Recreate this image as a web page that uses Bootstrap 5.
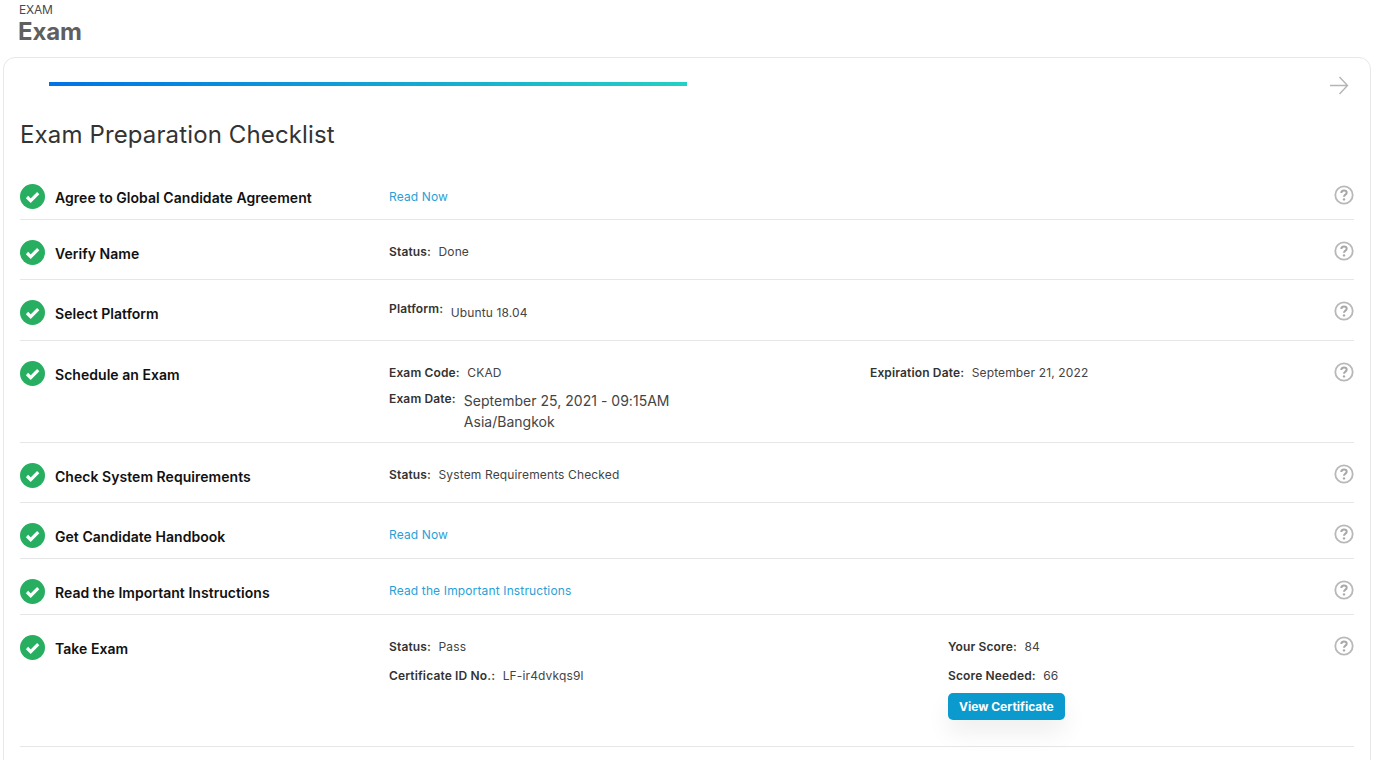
<!DOCTYPE html>
<html lang="en">
<head>
  <meta charset="UTF-8" />
  <meta name="viewport" content="width=device-width, initial-scale=1.0" />
  <title>Exam</title>
  <link href="https://cdn.jsdelivr.net/npm/bootstrap@5.3.3/dist/css/bootstrap.min.css" rel="stylesheet" />
  <style>
    html, body { height: 100%; overflow: hidden; }
    body { font-family: Inter, "Liberation Sans", sans-serif; background: #fff; color: #3a3a3a; }
    .page-head { padding: 3px 0 0 18px; height: 57px; }
    .crumb { font-size: 12px; line-height: 14px; color: #4a4a4a; padding-left: 1px; letter-spacing: -.2px; }
    .page-title { font-size: 24px; line-height: 30px; font-weight: 700; color: #5f5f5f; margin: 0; letter-spacing: -.1px; }
    .exam-panel { margin: 0 7px 0 3px; border: 1px solid #e8e8e8; border-radius: 12px; padding: 0 16px 40px; height: 800px; }
    .top-strip { height: 55px; padding: 24px 5px 0 29px; }
    .progress-line { width: 638px; height: 4px; background: linear-gradient(90deg, #0073e6, #24d0c4); }
    .go-arrow { margin-top: -7px; }
    .panel-title { font-size: 24px; line-height: 30px; font-weight: 400; color: #333; margin: 7px 0 34px; letter-spacing: .13px; }
    .check-row { border-bottom: 1px solid #e6e6e6; padding-top: 20px; }
    .check-row.h-56 { height: 56px; }
    .check-row.h-60 { height: 60px; }
    .check-row.h-61 { height: 61px; }
    .check-row.h-102 { height: 102px; }
    .check-row.h-132 { height: 132px; }
    .check-row.first { padding-top: 0; height: 36px; }
    .state-icon { width: 25px; height: 25px; flex: none; margin-right: 10px; }
    .row-name { width: 334px; flex: none; font-size: 14px; line-height: 20px; font-weight: 600; color: #111; padding-top: 4px; letter-spacing: .04px; }
    .row-body { flex: 1; font-size: 12px; line-height: 18px; color: #444; letter-spacing: .14px; padding-top: 3px; }
    .row-body b { font-weight: 600; color: #333; margin-right: 4px; }
    .first .row-body { padding-top: 4px; }
    .row-link { color: #2a9fd6; text-decoration: none; }
    .row-body.raised { padding-top: 0; }
    .low-value { position: relative; top: 4px; }
    .help-icon { width: 20px; height: 20px; flex: none; margin-top: 1px; }
    .date-big { font-size: 14px; line-height: 21px; color: #444; letter-spacing: .02px; margin-left: 4px; }
    .expiry-col { width: 481px; flex: none; }
    .score-col { width: 559px; flex: none; }
    .score-gap { margin-top: 11px; }
    .cert-btn { background: #0b9ace; color: #fff; font-size: 12px; font-weight: 700; padding: 0 11px; line-height: 27px; border-radius: 5px; border: 0; box-shadow: 0 12px 24px rgba(0,0,0,.07); letter-spacing: 0; margin-top: 8px; }
    .cert-btn:hover { background: #0b9ace; color: #fff; }
  </style>
</head>
<body>
  <div class="page-head">
    <div class="crumb">EXAM</div>
    <h1 class="page-title">Exam</h1>
  </div>

  <div class="exam-panel">
    <div class="top-strip d-flex justify-content-between">
      <div class="progress-line"></div>
      <svg class="go-arrow" width="20" height="20" viewBox="0 0 20 20" fill="none" stroke="#b5b5b5" stroke-width="1.4"><path d="M1 10.5H18.5M10.5 2l8 8.500-8 8.500"/></svg>
    </div>
    <h2 class="panel-title">Exam Preparation Checklist</h2>

    <svg width="0" height="0" class="d-block">
      <symbol id="okIcon" viewBox="0 0 25 25"><circle cx="12.500" cy="12.500" r="12.500" fill="#27ae60"/><path d="M7 13l3.700 3.700 7.500-7.500" fill="none" stroke="#fff" stroke-width="3.200"/></symbol>
      <symbol id="helpIcon" viewBox="0 0 20 20"><circle cx="10" cy="10" r="8.700" fill="none" stroke="#b8b8b8" stroke-width="1.800"/><path d="M7.300 8c0-1.700 1.100-2.600 2.700-2.600s2.700.9 2.700 2.300c0 1.900-2.700 2-2.700 4" fill="none" stroke="#a8a8a8" stroke-width="2"/><circle cx="10" cy="14.400" r="1.200" fill="#a8a8a8"/></symbol>
    </svg>

    <div class="check-row first d-flex">
      <svg class="state-icon"><use href="#okIcon"/></svg>
      <div class="row-name">Agree to Global Candidate Agreement</div>
      <div class="row-body"><a class="row-link" href="#">Read Now</a></div>
      <svg class="help-icon"><use href="#helpIcon"/></svg>
    </div>
    <div class="check-row h-60 d-flex">
      <svg class="state-icon"><use href="#okIcon"/></svg>
      <div class="row-name">Verify Name</div>
      <div class="row-body"><b>Status:</b> Done</div>
      <svg class="help-icon"><use href="#helpIcon"/></svg>
    </div>
    <div class="check-row h-61 d-flex">
      <svg class="state-icon"><use href="#okIcon"/></svg>
      <div class="row-name">Select Platform</div>
      <div class="row-body raised"><b>Platform:</b> <span class="low-value">Ubuntu 18.04</span></div>
      <svg class="help-icon"><use href="#helpIcon"/></svg>
    </div>
    <div class="check-row h-102 d-flex">
      <svg class="state-icon"><use href="#okIcon"/></svg>
      <div class="row-name">Schedule an Exam</div>
      <div class="row-body">
        <div class="d-flex">
          <div class="expiry-col d-flex"><span><b>Exam Code:</b> CKAD</span></div>
          <div><b>Expiration Date:</b> September 21, 2022</div>
        </div>
        <div class="d-flex mt-2">
          <b>Exam Date:</b>
          <div class="date-big">September 25, 2021 - 09:15AM<br>Asia/Bangkok</div>
        </div>
      </div>
      <svg class="help-icon"><use href="#helpIcon"/></svg>
    </div>
    <div class="check-row h-60 d-flex">
      <svg class="state-icon"><use href="#okIcon"/></svg>
      <div class="row-name">Check System Requirements</div>
      <div class="row-body"><b>Status:</b> System Requirements Checked</div>
      <svg class="help-icon"><use href="#helpIcon"/></svg>
    </div>
    <div class="check-row h-56 d-flex">
      <svg class="state-icon"><use href="#okIcon"/></svg>
      <div class="row-name">Get Candidate Handbook</div>
      <div class="row-body"><a class="row-link" href="#">Read Now</a></div>
      <svg class="help-icon"><use href="#helpIcon"/></svg>
    </div>
    <div class="check-row h-56 d-flex">
      <svg class="state-icon"><use href="#okIcon"/></svg>
      <div class="row-name">Read the Important Instructions</div>
      <div class="row-body"><a class="row-link" href="#">Read the Important Instructions</a></div>
      <svg class="help-icon"><use href="#helpIcon"/></svg>
    </div>
    <div class="check-row h-132 d-flex">
      <svg class="state-icon"><use href="#okIcon"/></svg>
      <div class="row-name">Take Exam</div>
      <div class="row-body d-flex">
        <div class="score-col">
          <div><b>Status:</b> Pass</div>
          <div class="score-gap"><b>Certificate ID No.:</b> LF-ir4dvkqs9l</div>
        </div>
        <div>
          <div><b>Your Score:</b> 84</div>
          <div class="score-gap"><b>Score Needed:</b> 66</div>
          <a class="btn cert-btn" href="#">View Certificate</a>
        </div>
      </div>
      <svg class="help-icon"><use href="#helpIcon"/></svg>
    </div>
  </div>

  <script src="https://cdn.jsdelivr.net/npm/bootstrap@5.3.3/dist/js/bootstrap.bundle.min.js"></script>
</body>
</html>
